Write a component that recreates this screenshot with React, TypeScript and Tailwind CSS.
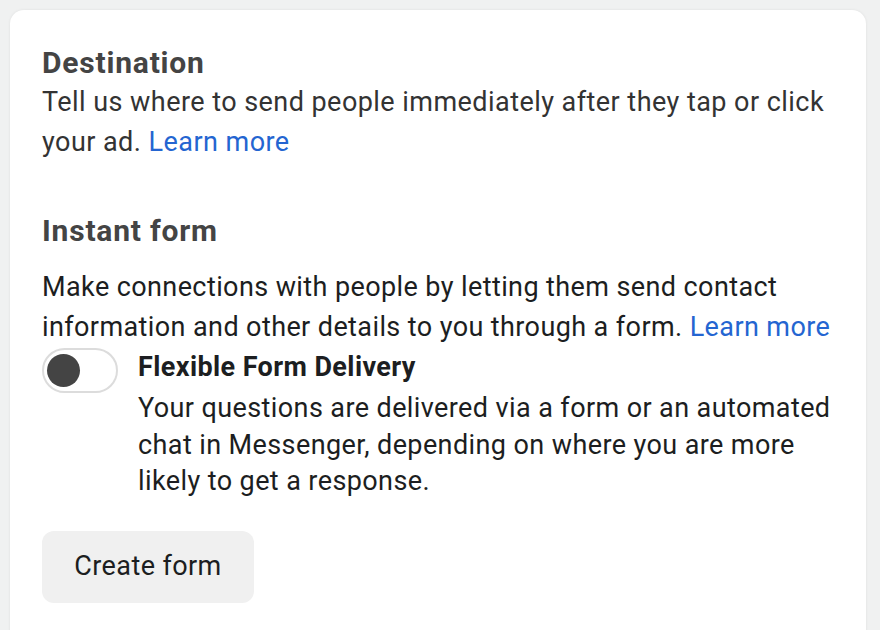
import React from "react";

export default function App() {
  return (
    <div
      className="w-[880px] h-[630px] overflow-hidden bg-[#f0f1f1] pt-[10px] pl-[10px]"
      style={{ fontFamily: "Roboto, 'Liberation Sans', sans-serif" }}
    >
      <div className="w-[856px] h-[700px] bg-white rounded-[14px] shadow-[0_0_3px_rgba(0,0,0,0.08)] pl-8 pr-[20px] pt-[34px]">
        <h2 className="text-[30px] leading-[38px] tracking-[0.8px] font-bold text-[#444]">Destination</h2>
        <p className="text-[27px] leading-[40px] tracking-[0.45px] text-[#333]">
          Tell us where to send people immediately after they tap or click your ad.{" "}
          <span className="text-[#2465d1]">Learn more</span>
        </p>

        <h2 className="mt-[50px] text-[30px] leading-[38px] tracking-[0.8px] font-bold text-[#444]">Instant form</h2>
        <p className="mt-[17px] text-[27px] leading-[40px] tracking-[0.4px] text-[#1c1e21]">
          Make connections with people by letting them send contact information and other details
          to you through a form. <span className="text-[#2465d1]">Learn more</span>
        </p>

        <div className="flex gap-[20px] mt-[1px]">
          <div className="shrink-0 w-[76px] h-[45px] rounded-full border-2 border-[#dcdcdc] bg-white flex items-center px-[3px]">
            <div className="w-[33px] h-[33px] rounded-full bg-[#444]" />
          </div>
          <div>
            <div className="text-[27px] leading-[38px] tracking-[0.4px] font-bold text-[#1c1e21]">
              Flexible Form Delivery
            </div>
            <p className="mt-[4px] text-[27px] leading-[36.5px] tracking-[0.4px] text-[#1c1e21]">
              Your questions are delivered via a form or an automated chat in Messenger, depending on
              where you are more likely to get a response.
            </p>
          </div>
        </div>

        <button className="mt-[31px] w-[212px] h-[72px] rounded-[12px] bg-[#f0f0f0] text-[27px] tracking-[0.4px] text-[#1c1e21]">
          Create form
        </button>
      </div>
    </div>
  );
}
